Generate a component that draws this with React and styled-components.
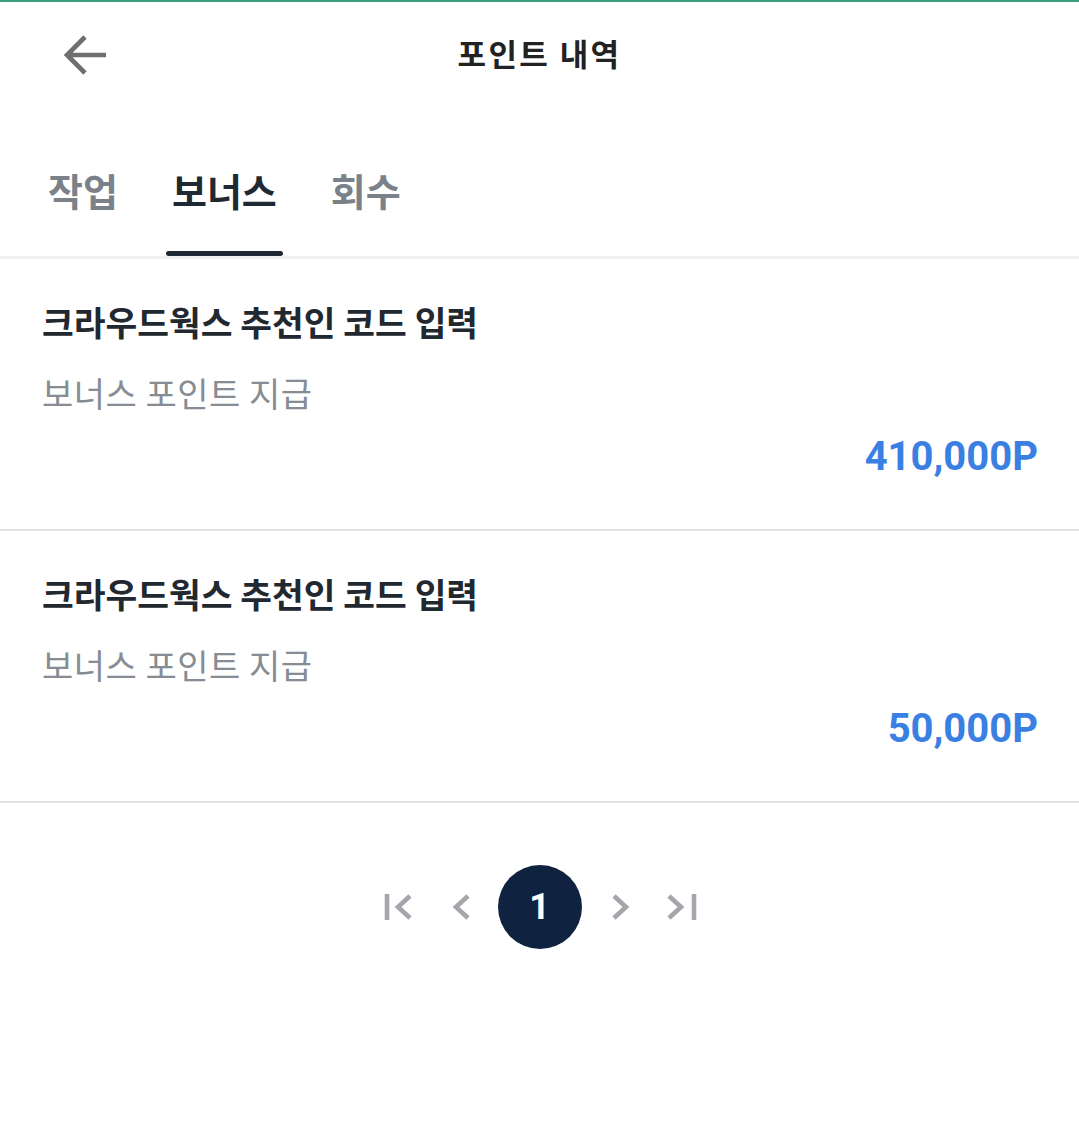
import React, { useState } from "react";
import styled, { createGlobalStyle } from "styled-components";

const GlobalStyle = createGlobalStyle`
  html, body {
    margin: 0;
    padding: 0;
    background: #ffffff;
  }
  body {
    font-family: "Noto Sans CJK KR", "Noto Sans", Roboto, sans-serif;
    -webkit-font-smoothing: antialiased;
  }
  * {
    box-sizing: border-box;
  }
`;

const Page = styled.div`
  width: 100%;
  min-height: 1131px;
  border-top: 2px solid #3aa07e;
  background: #fff;
`;

const Header = styled.div`
  position: relative;
  height: 100px;
  display: flex;
  align-items: center;
  justify-content: center;
`;

const BackButton = styled.button`
  position: absolute;
  left: 62px;
  top: 30px;
  width: 46px;
  height: 46px;
  padding: 0;
  border: none;
  background: none;
  cursor: pointer;
  display: flex;
  align-items: center;
  justify-content: center;
`;

const Title = styled.h1`
  margin: 0;
  font-size: 31px;
  font-weight: 700;
  color: #222222;
  letter-spacing: 2.4px;
`;

const TabBar = styled.div`
  display: flex;
  gap: 42px;
  padding: 0 0 0 42px;
  border-bottom: 3px solid #f0f0f0;
`;

const Tab = styled.button`
  position: relative;
  border: none;
  background: none;
  padding: 62px 6px 40px;
  font-family: "Noto Sans CJK KR", sans-serif;
  font-size: 38px;
  line-height: 52px;
  font-weight: 700;
  color: ${({ active }) => (active ? "#1f2933" : "#7b8189")};
  cursor: pointer;

  &::after {
    content: "";
    display: ${({ active }) => (active ? "block" : "none")};
    position: absolute;
    left: 0;
    right: 0;
    bottom: 0;
    height: 5px;
    border-radius: 3px;
    background: #1f2933;
  }
`;

const Item = styled.div`
  padding: 38px 41px 47px 42px;
  border-bottom: 2px solid #e2e2e2;
  display: flex;
  flex-direction: column;
`;

const ItemTitle = styled.div`
  font-size: 34.5px;
  line-height: 48px;
  font-weight: 700;
  color: #212830;
`;

const ItemSub = styled.div`
  margin-top: 25px;
  font-size: 34px;
  line-height: 46px;
  font-weight: 400;
  color: #868c93;
  letter-spacing: 0.5px;
`;

const Amount = styled.div`
  margin-top: 16px;
  align-self: flex-end;
  font-family: Roboto, "Noto Sans", sans-serif;
  font-size: 40px;
  line-height: 50px;
  font-weight: 700;
  color: #3a80e2;
`;

const Pager = styled.div`
  display: flex;
  justify-content: center;
  align-items: center;
  padding-top: 62px;
`;

const PageArrow = styled.button`
  width: 44px;
  height: 44px;
  padding: 0;
  border: none;
  background: none;
  display: flex;
  align-items: center;
  justify-content: center;
  margin: ${({ m }) => m || "0"};
  cursor: pointer;
`;

const PageNum = styled.button`
  width: 84px;
  height: 84px;
  border-radius: 50%;
  border: none;
  background: #0f2340;
  color: #ffffff;
  font-family: Roboto, sans-serif;
  font-size: 36px;
  font-weight: 700;
  display: flex;
  align-items: center;
  justify-content: center;
  padding: 0;
`;

const BackArrow = () => (
  <svg width="46" height="46" viewBox="0 0 46 46" fill="none">
    <path
      d="M44 23 H6 M23 5 L5 23 L23 41"
      stroke="#6f6f6f"
      strokeWidth="4.6"
      strokeLinejoin="miter"
    />
  </svg>
);

const Chevron = ({ dir = "left", bar = false }) => {
  const left = dir === "left";
  return (
    <svg width="34" height="30" viewBox="0 0 34 30" fill="none">
      {left ? (
        <>
          {bar && <path d="M6 2 V28" stroke="#a3a6aa" strokeWidth="4.6" />}
          <path
            d={bar ? "M29 4 L17 15 L29 26" : "M25 4 L13 15 L25 26"}
            stroke="#a3a6aa"
            strokeWidth="4.6"
          />
        </>
      ) : (
        <>
          {bar && <path d="M29 2 V28" stroke="#a3a6aa" strokeWidth="4.6" />}
          <path
            d={bar ? "M4 4 L16 15 L4 26" : "M11 4 L23 15 L11 26"}
            stroke="#a3a6aa"
            strokeWidth="4.6"
          />
        </>
      )}
    </svg>
  );
};

const items = [
  { title: "크라우드웍스 추천인 코드 입력", sub: "보너스 포인트 지급", amount: "410,000P" },
  { title: "크라우드웍스 추천인 코드 입력", sub: "보너스 포인트 지급", amount: "50,000P" },
];

const tabs = ["작업", "보너스", "회수"];

export default function App() {
  const [tab, setTab] = useState(1);

  return (
    <>
      <GlobalStyle />
      <Page>
        <Header>
          <BackButton aria-label="back">
            <BackArrow />
          </BackButton>
          <Title>포인트 내역</Title>
        </Header>
        <TabBar>
          {tabs.map((t, i) => (
            <Tab key={t} active={i === tab} onClick={() => setTab(i)}>
              {t}
            </Tab>
          ))}
        </TabBar>
        {items.map((item, i) => (
          <Item key={i}>
            <ItemTitle>{item.title}</ItemTitle>
            <ItemSub>{item.sub}</ItemSub>
            <Amount>{item.amount}</Amount>
          </Item>
        ))}
        <Pager>
          <PageArrow m="0 18px 0 0">
            <Chevron dir="left" bar />
          </PageArrow>
          <PageArrow m="0 16px 0 0">
            <Chevron dir="left" />
          </PageArrow>
          <PageNum>1</PageNum>
          <PageArrow m="0 0 0 16px">
            <Chevron dir="right" />
          </PageArrow>
          <PageArrow m="0 0 0 18px">
            <Chevron dir="right" bar />
          </PageArrow>
        </Pager>
      </Page>
    </>
  );
}
